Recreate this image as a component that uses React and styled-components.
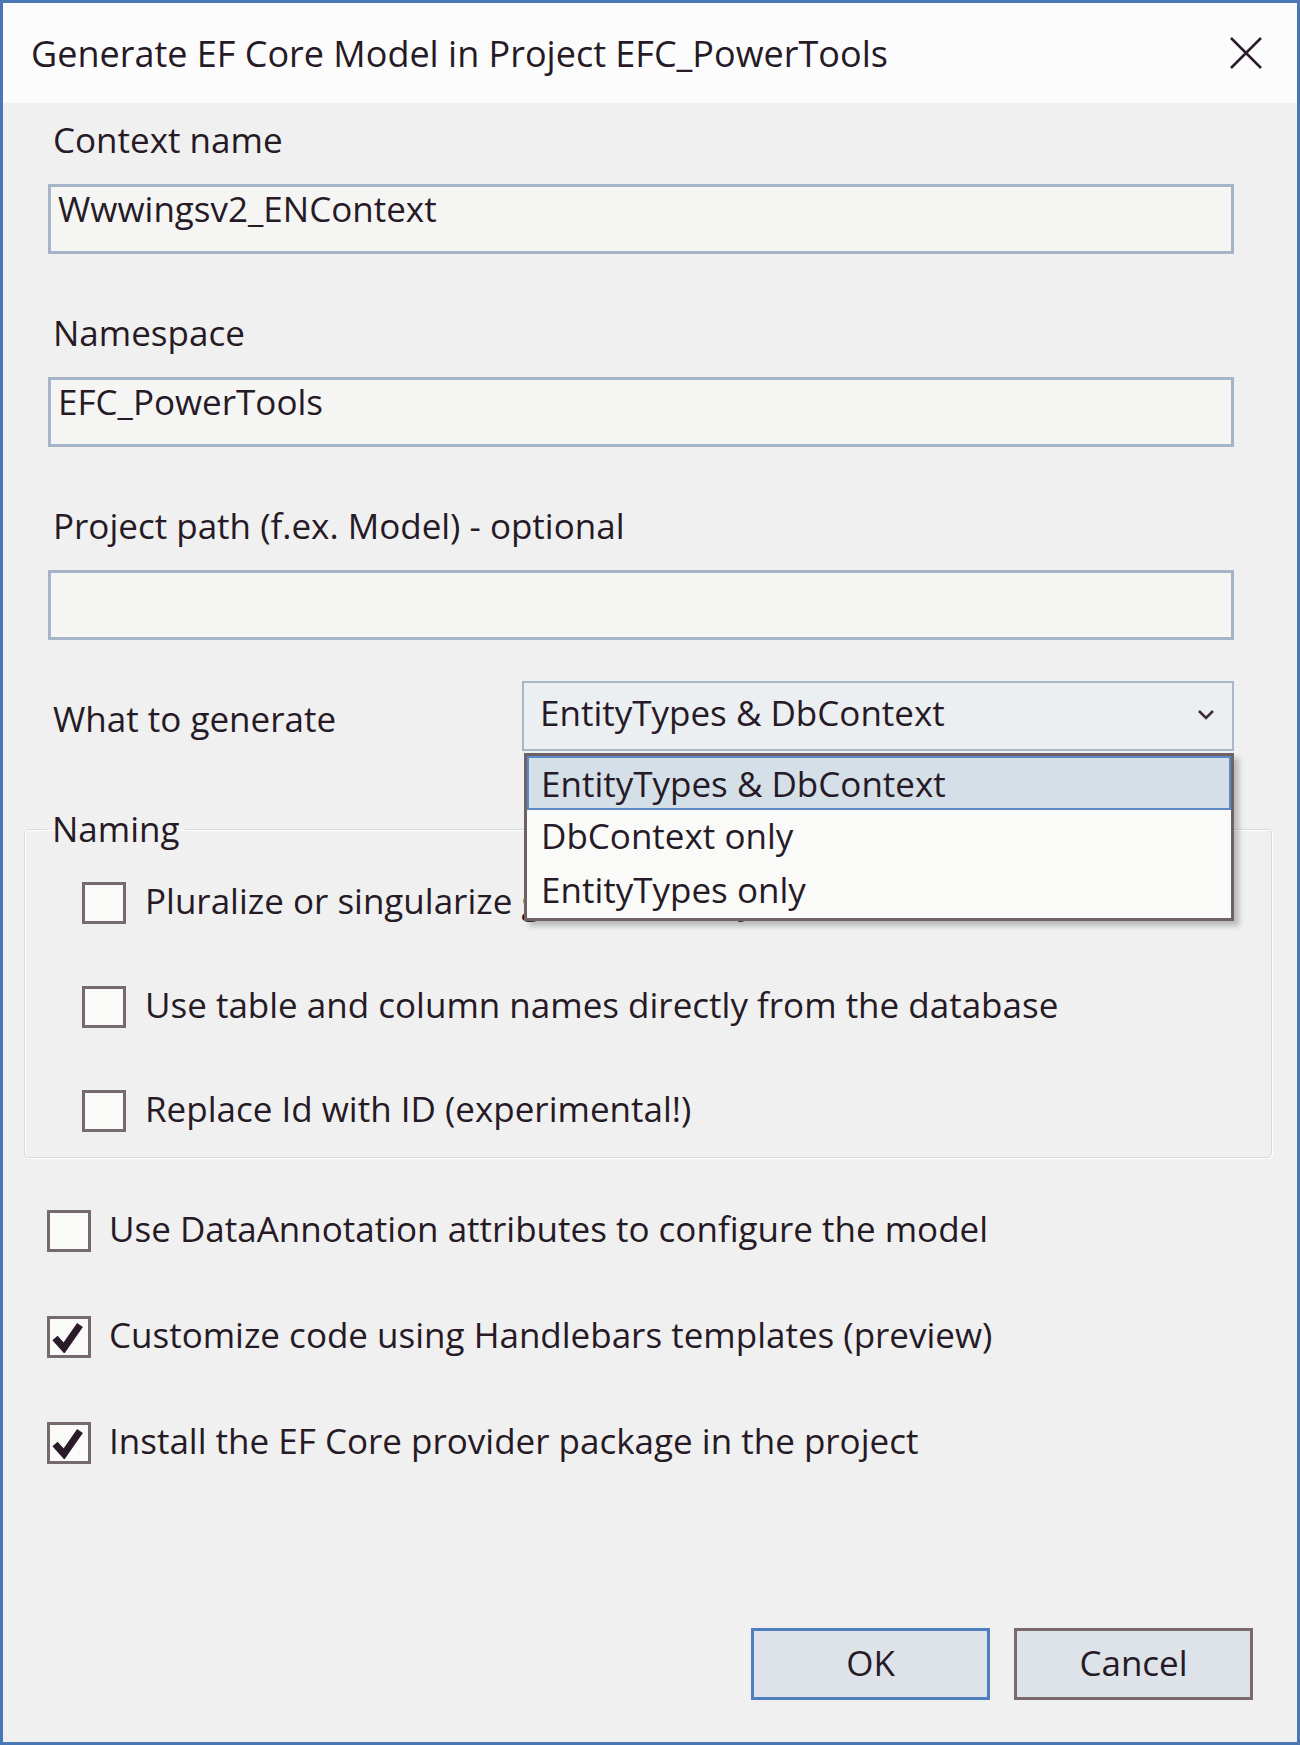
import React from 'react';
import styled, { createGlobalStyle } from 'styled-components';

const GlobalStyle = createGlobalStyle`
  html, body {
    margin: 0;
    padding: 0;
    background: #ffffff;
  }
  * { box-sizing: border-box; }
`;

const ink = '#261a26';
const font = `"Open Sans", "Noto Sans", sans-serif`;

const Window = styled.div`
  width: 1300px;
  height: 1745px;
  border: 3px solid #4a78b4;
  display: flex;
  flex-direction: column;
  font-family: ${font};
  color: ${ink};
  font-size: 35px;
`;

const TitleBar = styled.div`
  height: 100px;
  flex: none;
  background: #fcfcfc;
  display: flex;
  align-items: center;
  justify-content: space-between;
  padding: 0 34px 0 28px;
`;

const Title = styled.div`
  font-size: 36px;
  line-height: 40px;
  padding-top: 2px;
`;

const Content = styled.div`
  flex: 1;
  background: #f0f0f0;
  display: flex;
  flex-direction: column;
  padding: 17px 25px 42px 21px;
`;

const Fields = styled.div`
  display: flex;
  flex-direction: column;
  gap: 59px;
  padding: 0 38px 0 24px;
`;

const Field = styled.div`
  display: flex;
  flex-direction: column;
  gap: 24px;
`;

const Label = styled.div`
  line-height: 40px;
  padding-left: 5px;
  white-space: nowrap;
`;

const TextBox = styled.div`
  height: 70px;
  border: 3px solid #a5b4c6;
  background: #f5f5f4;
  padding: 2px 7px;
  line-height: 40px;
`;

const SelectRow = styled.div`
  display: flex;
  align-items: center;
  margin-top: -18px;
`;

const SelectLabel = styled(Label)`
  width: 474px;
  padding-top: 6px;
`;

const Select = styled.div`
  position: relative;
  flex: 1;
  height: 70px;
  border: 2px solid #a9b6c6;
  background: #eceff2;
  display: flex;
  align-items: center;
  justify-content: space-between;
  padding: 0 18px 8px 16px;
`;

const Chevron = styled.svg`
  width: 16px;
  height: 10px;
  margin-top: 6px;
`;

const Menu = styled.div`
  position: absolute;
  left: 0;
  right: -2px;
  top: 70px;
  background: #fafaf9;
  border: 3px solid #6f6266;
  box-shadow: 5px 5px 5px rgba(90, 90, 90, 0.35);
  z-index: 5;
`;

const MenuItem = styled.div`
  height: 54px;
  line-height: 52px;
  padding-left: 12px;
  background: ${p => (p.$active ? '#d4dfe8' : 'transparent')};
  border: 2px solid ${p => (p.$active ? '#5b8ac6' : 'transparent')};
  border-width: ${p => (p.$active ? '2px' : '0 2px')};
`;

const Group = styled.fieldset`
  margin: 58px 0 0 0;
  padding: 0 0 24px 0;
  border: 1px solid #d3dbe2;
  border-radius: 5px;
  box-shadow: inset 1px 1px 0 #ffffff, 1px 1px 0 #ffffff;
`;

const Legend = styled.legend`
  margin-left: 22px;
  padding: 0 5px;
  line-height: 40px;
`;

const GroupRows = styled.div`
  display: flex;
  flex-direction: column;
  gap: 60px;
  padding: 32px 0 0 57px;
`;

const CheckRow = styled.div`
  display: flex;
  align-items: center;
  gap: ${p => (p.$tight ? 18 : 19)}px;
  height: 44px;
  white-space: nowrap;
`;

const Box = styled.div`
  width: 44px;
  height: 42px;
  flex: none;
  border: 3px solid #766a6c;
  background: #fafaf9;
  display: flex;
  align-items: center;
  justify-content: center;
`;

const RowText = styled.span`
  line-height: 40px;
  padding-bottom: 4px;
`;

const Options = styled.div`
  display: flex;
  flex-direction: column;
  gap: 62px;
  margin: 51px 0 0 23px;
`;

const Buttons = styled.div`
  margin-top: auto;
  display: flex;
  justify-content: flex-end;
  gap: 24px;
  padding-right: 19px;
`;

const Button = styled.button`
  width: 239px;
  height: 72px;
  font-family: ${font};
  font-size: 35px;
  color: ${ink};
  background: #dde3e8;
  border: 3px solid ${p => (p.$default ? '#4f7fbf' : '#7a6a6c')};
  padding: 0 0 4px;
`;

function CheckBox({ checked, label, tight }) {
  return (
    <CheckRow $tight={tight}>
      <Box>
        {checked && (
          <svg width="34" height="32" viewBox="0 0 34 32">
            <path d="M3 17 L12 27 L28 4" fill="none" stroke="#2a1a2a" strokeWidth="7" strokeLinejoin="miter" />
          </svg>
        )}
      </Box>
      <RowText>{label}</RowText>
    </CheckRow>
  );
}

export default function App() {
  return (
    <>
      <GlobalStyle />
      <Window>
        <TitleBar>
          <Title>Generate EF Core Model in Project EFC_PowerTools</Title>
          <svg width="34" height="34" viewBox="0 0 34 34">
            <path d="M2 2 L32 32 M32 2 L2 32" stroke="#2a1a2a" strokeWidth="2.5" />
          </svg>
        </TitleBar>
        <Content>
          <Fields>
            <Field>
              <Label>Context name</Label>
              <TextBox>Wwwingsv2_ENContext</TextBox>
            </Field>
            <Field>
              <Label>Namespace</Label>
              <TextBox>EFC_PowerTools</TextBox>
            </Field>
            <Field>
              <Label>Project path (f.ex. Model) - optional</Label>
              <TextBox />
            </Field>
            <SelectRow>
              <SelectLabel>What to generate</SelectLabel>
              <Select>
                <span>EntityTypes &amp; DbContext</span>
                <Chevron viewBox="0 0 16 10">
                  <path d="M1 1 L8 8 L15 1" fill="none" stroke="#3a2a33" strokeWidth="2.5" />
                </Chevron>
                <Menu>
                  <MenuItem $active>EntityTypes &amp; DbContext</MenuItem>
                  <MenuItem>DbContext only</MenuItem>
                  <MenuItem>EntityTypes only</MenuItem>
                </Menu>
              </Select>
            </SelectRow>
          </Fields>

          <Group>
            <Legend>Naming</Legend>
            <GroupRows>
              <CheckBox label="Pluralize or singularize generated object names" />
              <CheckBox label="Use table and column names directly from the database" />
              <CheckBox label="Replace Id with ID (experimental!)" />
            </GroupRows>
          </Group>

          <Options>
            <CheckBox tight label="Use DataAnnotation attributes to configure the model" />
            <CheckBox tight checked label="Customize code using Handlebars templates (preview)" />
            <CheckBox tight checked label="Install the EF Core provider package in the project" />
          </Options>

          <Buttons>
            <Button $default>OK</Button>
            <Button>Cancel</Button>
          </Buttons>
        </Content>
      </Window>
    </>
  );
}
